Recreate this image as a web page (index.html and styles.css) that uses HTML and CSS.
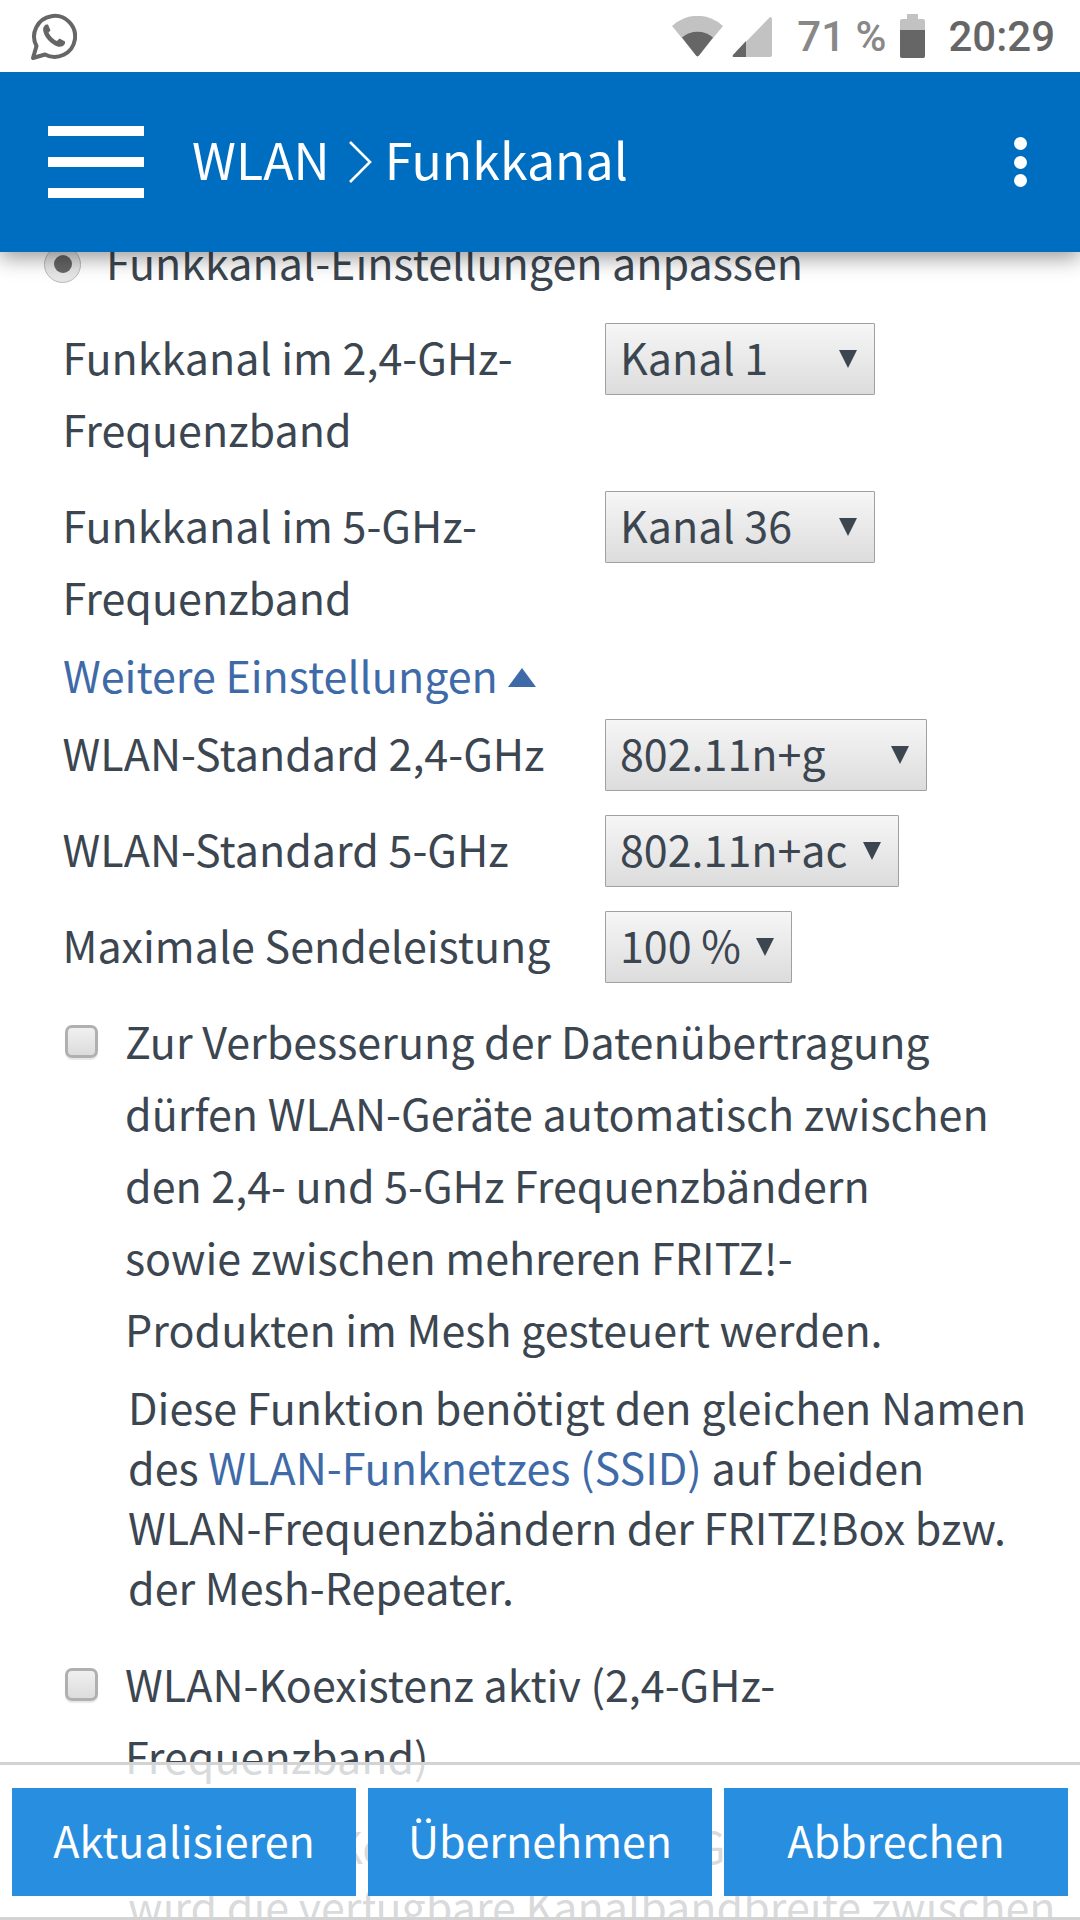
FILE: index.html
```html
<!DOCTYPE html>
<html lang="de">
<head>
    <meta charset="UTF-8">
    <title>WLAN Funkkanal</title>
    <link rel="stylesheet" href="styles.css">
</head>
<body>
<div id="screen">
    <div class="status-bar">
        <svg class="whatsapp" viewBox="0 0 47 47">
            <path d="M3 45 L6.5 33 A20.5 20.5 0 1 1 15 41.5 Z" fill="none" stroke="#666" stroke-width="4" stroke-linejoin="round"/>
            <path d="M16 11.5 C13.5 13 12.5 15.5 13.5 19 C15.5 25.5 21 31 27.5 33.5 C31 34.5 34 33 35 30.5 L35 28.5 L29.5 25.5 L27 28 C24 27 20 23 18.5 19.5 L20.5 17.5 L18 11.5 Z" fill="#666"/>
        </svg>
        <div class="status-right">
            <svg class="wifi" viewBox="0 0 51 41">
                <path d="M0 10 A37 37 0 0 1 51 10 L25.5 41 Z" fill="#c2c2c2"/>
                <path d="M10 21.5 A24 24 0 0 1 41 21.5 L27 39.5 Q25.5 41 24 39.5 Z" fill="#666"/>
            </svg>
            <svg class="signal" viewBox="0 0 40 40">
                <path d="M38 0 Q40 0 40 2 V38 Q40 40 38 40 H2 Q0 40 1 38 Z" fill="#c2c2c2"/>
                <path d="M14 24 V40 H2 Q0 40 1 38 Z" fill="#666"/>
            </svg>
            <span class="battery-text">71 %</span>
            <div class="battery">
                <div class="battery-nub"></div>
                <div class="battery-body"><div class="battery-level"></div></div>
            </div>
            <span class="clock">20:29</span>
        </div>
    </div>

    <header class="app-bar">
        <div class="hamburger"><span></span><span></span><span></span></div>
        <h1 class="title">
            <span>WLAN</span>
            <svg class="crumb" viewBox="0 0 24 42"><path d="M2 1 L22 21 L2 41" fill="none" stroke="#fff" stroke-width="2.6"/></svg>
            <span>Funkkanal</span>
        </h1>
        <div class="dots"><span></span><span></span><span></span></div>
    </header>

    <main class="content">
        <div class="radio-row">
            <div class="radio"><div class="radio-dot"></div></div>
            <span class="row-text">Funkkanal-Einstellungen anpassen</span>
        </div>

        <div class="row">
            <label class="row-label">Funkkanal im 2,4-GHz-<br>Frequenzband</label>
            <div class="select select-kanal">Kanal 1<i class="arrow"></i></div>
        </div>
        <div class="row">
            <label class="row-label">Funkkanal im 5-GHz-<br>Frequenzband</label>
            <div class="select select-kanal">Kanal 36<i class="arrow"></i></div>
        </div>

        <a class="more-link">Weitere Einstellungen <i class="arrow-up"></i></a>

        <div class="row">
            <label class="row-label">WLAN-Standard 2,4-GHz</label>
            <div class="select select-g">802.11n+g<i class="arrow"></i></div>
        </div>
        <div class="row">
            <label class="row-label">WLAN-Standard 5-GHz</label>
            <div class="select select-ac">802.11n+ac<i class="arrow"></i></div>
        </div>
        <div class="row">
            <label class="row-label">Maximale Sendeleistung</label>
            <div class="select select-power">100 %<i class="arrow"></i></div>
        </div>

        <div class="check-row">
            <div class="checkbox"></div>
            <p>Zur Verbesserung der Datenübertragung<br>dürfen WLAN-Geräte automatisch zwischen<br>den 2,4- und 5-GHz Frequenzbändern<br>sowie zwischen mehreren FRITZ!-<br>Produkten im Mesh gesteuert werden.</p>
        </div>
        <p class="note">Diese Funktion benötigt den gleichen Namen<br>des <a>WLAN-Funknetzes (SSID)</a> auf beiden<br>WLAN-Frequenzbändern der FRITZ!Box bzw.<br>der Mesh-Repeater.</p>

        <div class="check-row check-row-2">
            <div class="checkbox"></div>
            <p>WLAN-Koexistenz aktiv (2,4-GHz-<br>Frequenzband)</p>
        </div>
        <p class="note note-2">Bei WLAN-Koexistenz im 2,4-GHz-Band<br>wird die verfügbare Kanalbandbreite zwischen</p>
    </main>

    <footer class="button-bar">
        <button>Aktualisieren</button>
        <button>Übernehmen</button>
        <button>Abbrechen</button>
    </footer>
</div>
</body>
</html>
```

FILE: styles.css
```css
body, html {
    margin: 0;
    padding: 0;
    background: #fff;
}

#screen {
    width: 1080px;
    height: 1920px;
    position: relative;
    overflow: hidden;
    font-family: "Noto Sans CJK SC", "Noto Sans", sans-serif;
    font-size: 43px;
    color: #3c4650;
}

p {
    margin: 0;
}

/* Android status bar */
.status-bar {
    height: 72px;
    display: flex;
    align-items: center;
    justify-content: space-between;
    padding: 0 25px 0 30px;
    font-family: Roboto, sans-serif;
    font-weight: 500;
    background: #fff;
    position: relative;
    z-index: 3;
}

.whatsapp {
    width: 47px;
    height: 47px;
    margin-top: 1px;
}

.status-right {
    display: flex;
    align-items: center;
}

.wifi {
    width: 51px;
    height: 41px;
}

.signal {
    width: 40px;
    height: 40px;
    margin-left: 9px;
    margin-top: 2px;
}

.battery-text {
    font-size: 42px;
    color: #888;
    margin-left: 25px;
}

.battery {
    margin-left: 14px;
    width: 25px;
    display: flex;
    flex-direction: column;
    align-items: center;
}

.battery-nub {
    width: 11px;
    height: 5px;
    background: #c2c2c2;
}

.battery-body {
    width: 25px;
    height: 39px;
    border-radius: 2px;
    background: #c2c2c2;
    overflow: hidden;
    display: flex;
    align-items: flex-end;
}

.battery-level {
    width: 100%;
    height: 28px;
    background: #666;
}

.clock {
    font-size: 42px;
    color: #666;
    margin-left: 23px;
}

/* Blue header */
.app-bar {
    height: 180px;
    background: #006ec0;
    display: flex;
    align-items: center;
    position: relative;
    z-index: 2;
    box-shadow: 0 6px 20px rgba(0, 0, 0, 0.4);
    color: #fff;
}

.hamburger {
    margin-left: 48px;
    width: 96px;
    height: 72px;
    display: flex;
    flex-direction: column;
    justify-content: space-between;
}

.hamburger span {
    display: block;
    height: 10px;
    background: #fff;
}

.title {
    margin: -9px 0 0 48px;
    font-size: 50px;
    font-weight: normal;
    display: flex;
    align-items: center;
    flex: 1;
}

.crumb {
    width: 24px;
    height: 42px;
    margin: 9px 13px 0 18px;
}

.dots {
    margin-right: 53px;
    height: 50px;
    width: 13px;
    display: flex;
    flex-direction: column;
    justify-content: space-between;
}

.dots span {
    display: block;
    height: 13px;
    border-radius: 50%;
    background: #fff;
}

/* Form */
.content {
    margin-top: -24px;
    display: flex;
    flex-direction: column;
}

.radio-row {
    height: 72px;
    display: flex;
    align-items: center;
    padding-left: 44px;
    margin-bottom: 23px;
    line-height: 72px;
}

.row-text {
    margin: -6px 0 0 -2px;
}

.radio {
    width: 37px;
    height: 37px;
    box-sizing: border-box;
    border: 1px solid #bbb;
    border-radius: 50%;
    background: #e6e6e6;
    display: flex;
    align-items: center;
    justify-content: center;
    margin-right: 27px;
}

.radio-dot {
    width: 18px;
    height: 18px;
    border-radius: 50%;
    background: #666;
}

.row {
    display: flex;
    align-items: flex-start;
    padding-left: 62.5px;
    margin-bottom: 24px;
    line-height: 72px;
}

.row-label {
    width: 542.5px;
    margin: -3px 0 3px;
}

.select {
    height: 72px;
    box-sizing: border-box;
    border: 1px solid #a0a0a0;
    border-radius: 1px;
    background: linear-gradient(#f6f6f6, #dcdcdc);
    display: flex;
    align-items: center;
    justify-content: space-between;
    padding: 0 17px 6px 14px;
    line-height: 64px;
}

.select-kanal { width: 270px; }
.select-g { width: 322px; }
.select-ac { width: 294px; }
.select-power { width: 187px; }

.arrow {
    width: 0;
    height: 0;
    border-left: 9px solid transparent;
    border-right: 9px solid transparent;
    border-top: 18px solid #3c4650;
    margin-top: 6px;
}

.more-link {
    color: #3f6aa8;
    line-height: 60px;
    padding-left: 63px;
    margin: -15px 0 15px;
    display: flex;
    align-items: center;
    gap: 10px;
}

.arrow-up {
    width: 0;
    height: 0;
    border-left: 14px solid transparent;
    border-right: 14px solid transparent;
    border-bottom: 19px solid #3f6aa8;
    margin-top: 6px;
}

.check-row {
    display: flex;
    align-items: flex-start;
    padding-left: 65px;
    line-height: 72px;
}

.check-row p {
    margin: -3px 0 3px;
}

.checkbox {
    flex: none;
    width: 33px;
    height: 33px;
    box-sizing: border-box;
    margin: 18px 27px 0 0;
    border: 3px solid #b0b0b0;
    border-radius: 7px;
    background: linear-gradient(#f0f0f0, #dcdcdc);
    box-shadow: 0 2px 1px #e8e8e8;
}

.note {
    padding-left: 128px;
    line-height: 60px;
    margin-top: 9px;
    margin-bottom: 3px;
}

.note a {
    color: #3f6aa8;
}

.check-row-2 {
    margin-top: 31px;
}

.note-2 {
    margin-top: 21px;
}

/* Bottom buttons, lying over the scrolled form */
.button-bar {
    position: absolute;
    left: 0;
    right: 0;
    bottom: 0;
    height: 158px;
    box-sizing: border-box;
    padding: 23px 12px 0;
    display: flex;
    align-items: flex-start;
    gap: 12px;
    border-top: 3px solid #d3d3d3;
    border-bottom: 3px solid #d3d3d3;
    background: rgba(255, 255, 255, 0.8);
    z-index: 3;
}

.button-bar button {
    flex: 1;
    height: 108px;
    border: 0;
    padding: 0 0 6px;
    background: #288ee0;
    color: #fff;
    font-family: inherit;
    font-size: 43px;
}
```
